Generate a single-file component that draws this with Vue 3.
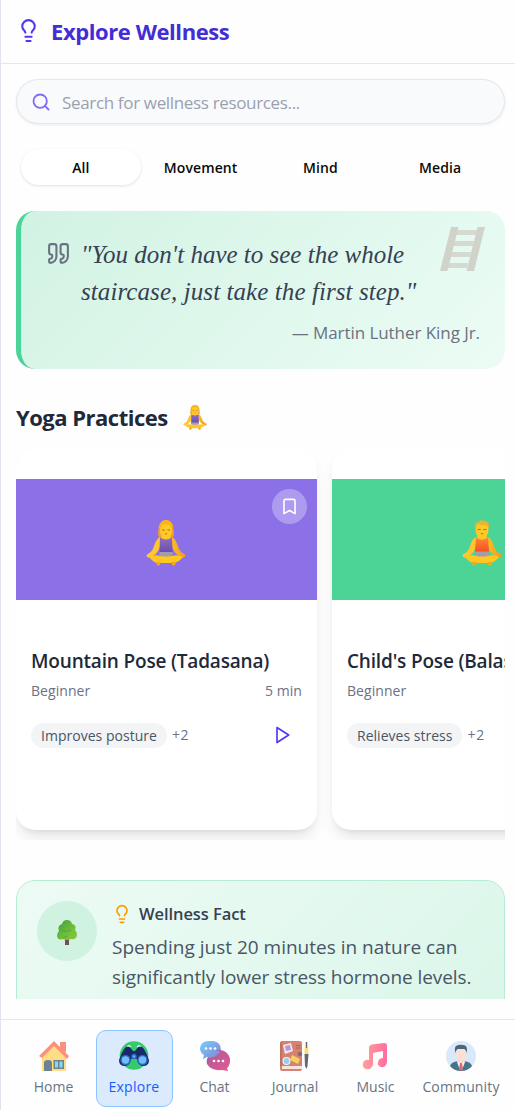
<script setup>
const tabs = ['All', 'Movement', 'Mind', 'Media']
const poses = [
  { name: 'Mountain Pose (Tadasana)', level: 'Beginner', time: '5 min', tag: 'Improves posture', theme: 'violet', figure: 'yoga-woman' },
  { name: "Child's Pose (Balasana)", level: 'Beginner', time: '', tag: 'Relieves stress', theme: 'green', figure: 'yoga-man' }
]
const nav = [
  { label: 'Home', icon: 'home' },
  { label: 'Explore', icon: 'explore' },
  { label: 'Chat', icon: 'chat' },
  { label: 'Journal', icon: 'journal' },
  { label: 'Music', icon: 'music' },
  { label: 'Community', icon: 'community' }
]
</script>

<template>
  <div class="app">
    <svg class="defs" width="0" height="0">
      <defs>
        <linearGradient id="g-skin" x1="0" y1="0" x2="1" y2="0">
          <stop offset="0" stop-color="#ffc83a" /><stop offset=".6" stop-color="#ffc21e" /><stop offset="1" stop-color="#f09a25" />
        </linearGradient>
        <linearGradient id="g-violet" x1="0" y1="0" x2="0" y2="1">
          <stop offset="0" stop-color="#9070c4" /><stop offset="1" stop-color="#6a50ae" />
        </linearGradient>
        <linearGradient id="g-orange" x1="0" y1="0" x2="0" y2="1">
          <stop offset="0" stop-color="#ff8a3c" /><stop offset="1" stop-color="#f4511e" />
        </linearGradient>
        <linearGradient id="g-chat1" x1="0" y1="0" x2="1" y2="1">
          <stop offset="0" stop-color="#79cdf8" /><stop offset="1" stop-color="#7e83d8" />
        </linearGradient>
        <linearGradient id="g-chat2" x1="0" y1="0" x2="1" y2="1">
          <stop offset="0" stop-color="#a55a9b" /><stop offset="1" stop-color="#e65a91" />
        </linearGradient>
        <linearGradient id="g-music" x1="0" y1="0" x2="1" y2="0">
          <stop offset="0" stop-color="#ffa09a" /><stop offset="1" stop-color="#ff6d9e" />
        </linearGradient>
        <linearGradient id="g-tree" x1="0" y1="0" x2="1" y2="1">
          <stop offset="0" stop-color="#3f9a42" /><stop offset=".55" stop-color="#6dbd3a" /><stop offset="1" stop-color="#8fc640" />
        </linearGradient>
        <symbol id="bulb" viewBox="0 0 24 24">
          <path d="M15 14c.2-1 .7-1.7 1.5-2.5 1-.9 1.5-2.2 1.5-3.5A6 6 0 0 0 6 8c0 1 .2 2.2 1.5 3.5.7.7 1.3 1.5 1.5 2.5M9 18h6M10 22h4" fill="none" stroke="currentColor" stroke-width="2" stroke-linecap="round" stroke-linejoin="round" />
        </symbol>
        <symbol id="yoga-body" viewBox="0 0 40 46">
          <path d="M15 17C10 18 9 24 7 29Q5 33 1 34.500Q-.5 37 3 37.800Q9 36 12 31L15 25L25 25L28 31Q31 36 37 37.800Q40.500 37 39 34.500Q35 33 33 29C31 24 30 18 25 17L23 14H17Z" fill="url(#g-skin)" />
          <path d="M3 37Q9 34 14 36H26Q31 34 37 37Q32 43 27 43H12Q8 43 3 37Z" fill="#ffc81e" />
          <path d="M10 42H15L13.500 45.500H11ZM25 42H30L29 45.500H26.500Z" fill="#f6a51f" />
          <path d="M14 31H26L27 35L24 36.500H16L13 35Z" fill="#a49bad" />
        </symbol>
        <symbol id="yoga-woman" viewBox="0 0 40 46">
          <path d="M13.500 18Q11 14 12.500 10Q12 1 20 0Q28 1 27.500 10Q29 14 26.500 18Z" fill="#f0a02a" />
          <use href="#yoga-body" width="40" height="46" />
          <path d="M14 17Q20 22 26 17L26.500 32H13.500Z" fill="url(#g-violet)" />
          <ellipse cx="20" cy="10.500" rx="6" ry="8" fill="#ffc928" />
          <path d="M13 9Q15 3 20 4.500Q25 3 27 8Q26 0 20 0Q14 0 13 9Z" fill="#ffb414" />
          <path d="M16 10h2.700M21.500 10h2.700" stroke="#8e5b24" stroke-width=".8" />
          <path d="M18.500 13.600h3L20 14.800Z" fill="#e93830" />
        </symbol>
        <symbol id="yoga-man" viewBox="0 0 40 46">
          <use href="#yoga-body" width="40" height="46" />
          <path d="M14 17Q20 23 26 17L27 31.500H13Z" fill="url(#g-orange)" />
          <ellipse cx="20" cy="10" rx="6.500" ry="8" fill="#ffc928" />
          <path d="M13 8Q12 3 16 2Q19-1 23 1Q28 2 27 8L25 5Q20 6 16 4Z" fill="#e8b431" />
          <path d="M15.700 9.500h3M21.400 9.500h3" stroke="#8e5b24" stroke-width=".8" />
          <path d="M18.500 13.200h3L20 14.400Z" fill="#c45125" />
        </symbol>
        <symbol id="home" viewBox="0 0 30 30">
          <path d="M5 13L15 4L27 14V30H3V15Z" fill="#ffdc86" />
          <path d="M21 1H27V12L21 7Z" fill="#fa8f7e" />
          <path d="M0 15L15 0L30 15L28 18L15 5L3 17Z" fill="#fd8f7d" />
          <path d="M5 30V22Q5 19 9 19Q13 19 13 22V30Z" fill="#6e8290" />
          <path d="M14.500 19H25V28H14.500Z" fill="#6e8290" />
          <path d="M16 20.500H19V26.500H16ZM20.500 20.500H23.500V26.500H20.500Z" fill="#86d8f6" />
        </symbol>
        <symbol id="explore" viewBox="0 0 30 30">
          <circle cx="15" cy="14.500" r="14.300" fill="#35ca6c" />
          <path d="M9 7Q8 3 12 6M21 7Q22 3 18 6" fill="none" stroke="#dff8ea" stroke-width="1.300" />
          <path d="M7 6Q11 4.500 13 9L15 10.500L17 9Q19 4.500 23 6Q26 8 30 19Q30 25 24 25Q19 25 18 18H12Q11 25 6 25Q0 25 0 19Q4 8 7 6Z" fill="#17286c" />
          <circle cx="6.500" cy="19" r="5.200" fill="#2e68bd" /><circle cx="23.500" cy="19" r="5.200" fill="#2e68bd" />
          <circle cx="6.500" cy="19" r="3.700" fill="#70beff" /><circle cx="23.500" cy="19" r="3.700" fill="#70beff" />
          <circle cx="15" cy="15.500" r="2.700" fill="#316dc4" /><circle cx="15" cy="15.500" r="1.300" fill="#64adfd" />
        </symbol>
        <symbol id="chat" viewBox="0 0 30 30">
          <path d="M9 0H13Q21 1 21 9Q20 15 13 16H7L3 18L4 14Q0 12 0 7Q1 0 9 0Z" fill="url(#g-chat1)" />
          <path d="M16 10Q19 8 24 10Q31 14 30 21Q29 26 27 27L28 30L22 29Q11 30 7 23Q6 19 8 16Q13 17 17 14Q20 12 20 10Z" fill="url(#g-chat2)" />
          <g fill="#fff"><circle cx="6" cy="7.500" r="1.300" /><circle cx="10.500" cy="7.500" r="1.300" /><circle cx="15" cy="7.500" r="1.300" /><circle cx="14" cy="20" r="1.300" /><circle cx="18.500" cy="20" r="1.300" /><circle cx="23" cy="20" r="1.300" /></g>
        </symbol>
        <symbol id="journal" viewBox="0 0 30 30">
          <rect x="0" y="0" width="22" height="30" rx="2" fill="#d58370" />
          <path d="M2 25H22V28H2Z" fill="#f5e5dd" /><path d="M1 1V25M16 4.500H20.500M16 7H20.500" stroke="#9a5c55" stroke-width=".8" />
          <path d="M3 4L11 2L13 10L5 13Z" fill="#f6e6ee" /><path d="M5 5L10 4L11 9L6 10Z" fill="#b397d9" />
          <circle cx="6.500" cy="20" r="4" fill="#eff5fb" /><circle cx="6.500" cy="20" r="2.900" fill="#9acbf0" />
          <path d="M12 14L20 18L18 23L10 19Z" fill="#f5d062" /><circle cx="20" cy="13" r="2.300" fill="#876b70" />
          <path d="M25 1H28L28.500 13H24.500Z" fill="#f9df68" /><path d="M24.500 13H28.500L27.500 25L26.500 28L25 25Z" fill="#616873" /><path d="M26.500 1V7" stroke="#616873" stroke-width="1" />
        </symbol>
        <symbol id="music" viewBox="0 0 30 30">
          <path d="M8 7Q8 4 11 3.500L23 2Q26 2 26 5V21Q25 27 20 26Q16 25 17 21Q18 17 22 17V10L12 12V23Q11 29 5 28Q1 27 2 22Q4 18 8 19Z" fill="url(#g-music)" />
        </symbol>
        <symbol id="community" viewBox="0 0 30 30">
          <circle cx="15" cy="15" r="15" fill="#d8e9fb" />
          <path d="M4 25Q5 21 12 20H18Q25 21 26 25Q22 30 15 30Q8 30 4 25Z" fill="#48738a" />
          <path d="M11 18H19V21L15 25L11 21Z" fill="#fbd9cd" />
          <path d="M11 21L15 23L19 21L16 29H14Z" fill="#f5f7fc" /><path d="M14 22H16L17 28L15 30L13 28Z" fill="#d66d75" />
          <ellipse cx="15" cy="12.500" rx="5.200" ry="7" fill="#fedfd3" />
          <path d="M9.500 12Q8 7 10 5Q14 3 19 4.500Q22 6 20.500 12Q20 9 18.500 8H11.500Q10 9 9.500 12Z" fill="#4a6577" />
        </symbol>
      </defs>
    </svg>

    <header class="header">
      <svg class="header-icon"><use href="#bulb" /></svg>
      <h1>Explore Wellness</h1>
    </header>

    <main class="content">
      <div class="search">
        <svg viewBox="0 0 24 24" width="20" height="20"><circle cx="11" cy="11" r="8" /><path d="m21 21-4.300-4.300" /></svg>
        <span>Search for wellness resources...</span>
      </div>

      <div class="tabs">
        <button v-for="(tab, i) in tabs" :key="tab" :class="{ active: i === 0 }">{{ tab }}</button>
      </div>

      <section class="quote">
        <svg class="ladder" viewBox="0 0 45 45">
          <path d="M13 3H37L36 8H12ZM10 14H34L33 19H9ZM7 25H31L30 30H6ZM4 36H28L27 41H3Z" fill="#d5d9cf" />
          <path d="M11 0H18.500L7.500 44H0ZM37.500 0H45L34 44H26.500Z" fill="#d1d3ca" />
        </svg>
        <div class="quote-row">
          <svg class="quote-icon" viewBox="0 0 24 24"><path d="M16 3a2 2 0 0 0-2 2v6a2 2 0 0 0 2 2 1 1 0 0 1 1 1v1a2 2 0 0 1-2 2 1 1 0 0 0-1 1v2a1 1 0 0 0 1 1 6 6 0 0 0 6-6V5a2 2 0 0 0-2-2zM5 3a2 2 0 0 0-2 2v6a2 2 0 0 0 2 2 1 1 0 0 1 1 1v1a2 2 0 0 1-2 2 1 1 0 0 0-1 1v2a1 1 0 0 0 1 1 6 6 0 0 0 6-6V5a2 2 0 0 0-2-2z" /></svg>
          <blockquote><span class="line-one">"You don't have to see the whole</span><br><span class="line-two">staircase, just take the first step."</span></blockquote>
        </div>
        <p class="author">— Martin Luther King Jr.</p>
      </section>

      <h2>Yoga Practices <svg width="24" height="25" viewBox="0 0 40 46" preserveAspectRatio="none"><use href="#yoga-woman" width="40" height="46" /></svg></h2>

      <div class="carousel">
        <article v-for="pose in poses" :key="pose.name" class="card">
          <div class="cover" :class="pose.theme">
            <svg width="40" height="46"><use :href="'#' + pose.figure" /></svg>
            <span class="bookmark"><svg viewBox="0 0 24 24" width="19" height="19"><path d="m19 21-7-4-7 4V5a2 2 0 0 1 2-2h10a2 2 0 0 1 2 2z" /></svg></span>
          </div>
          <div class="card-body">
            <h3>{{ pose.name }}</h3>
            <div class="meta"><span>{{ pose.level }}</span><span v-if="pose.time">{{ pose.time }}</span></div>
            <div class="benefits">
              <span class="tag">{{ pose.tag }}</span><span class="more">+2</span>
              <svg class="play" viewBox="0 0 24 24"><path d="M6 3l14 9-14 9z" /></svg>
            </div>
          </div>
        </article>
      </div>

      <div class="fact-window">
        <section class="fact">
          <div class="fact-icon">
            <svg width="20" height="25" viewBox="0 0 20 25">
              <path d="M8 17H12V25H8Z" fill="#795052" />
              <path d="M10 0Q14 0 15 4Q20 5 18 10Q21 13 19.500 17Q18 20 14 19Q10 21 6 19Q1 21 0 16Q0 13 2 11Q0 6 5 4Q6 0 10 0Z" fill="url(#g-tree)" />
              <path d="M5 10Q9 13 14 10M6 18Q8 17 10 16" fill="none" stroke="#4d9d32" stroke-width=".8" />
            </svg>
          </div>
          <div class="fact-copy">
            <h4><svg><use href="#bulb" /></svg><span>Wellness Fact</span></h4>
            <p>Spending just 20 minutes in nature can<br><span class="fact-two">significantly lower stress hormone levels.</span></p>
          </div>
        </section>
      </div>
    </main>

    <nav class="nav">
      <a v-for="item in nav" :key="item.label" :class="[item.icon, { current: item.icon === 'explore' }]">
        <svg width="30" height="30"><use :href="'#' + item.icon" /></svg>
        <span>{{ item.label }}</span>
      </a>
    </nav>
  </div>
</template>

<style>
html, body { margin: 0; overflow: hidden; background: #fefefe; }
</style>

<style scoped>
* { box-sizing: border-box; }
.app { height: 1110px; width: 515px; display: flex; flex-direction: column; border-left: 1px solid #e1e4f0; background: #fefefe; font-family: "Open Sans", "Noto Sans", sans-serif; color: #1e2939; overflow: hidden; }
.defs { position: absolute; }
svg { display: block; flex: none; }
h1, h2, h3, h4, p, blockquote { margin: 0; white-space: nowrap; }
.header { height: 64px; flex: none; display: flex; align-items: center; padding: 0 0 1px 15px; gap: 10px; border-bottom: 1px solid #e5e7eb; color: #4f39f6; }
.header-icon { width: 25px; height: 25px; margin-top: -1px; }
h1 { font-size: 22px; line-height: 30px; font-weight: 700; letter-spacing: -.42px; color: #432dd7; }
.content { flex: 1; min-height: 0; padding: 15px 10px 0 15px; display: flex; flex-direction: column; }
.search { height: 45px; flex: none; display: flex; align-items: center; gap: 11px; padding: 0 14px; border: 1px solid #e5e7eb; border-radius: 23px; background: #f9fafc; box-shadow: 0 1px 3px rgba(0,0,0,.08); }
.search svg { fill: none; stroke: #7c6cfb; stroke-width: 2.200; stroke-linecap: round; }
.search span { font-size: 17px; letter-spacing: -.34px; color: #99a1af; padding-top: 1px; }
.tabs { display: grid; grid-template-columns: repeat(4, 1fr); height: 36px; margin-top: 25px; padding: 0 5px; flex: none; }
.tabs button { height: 36px; border: 0; padding: 2px 0 0; background: transparent; border-radius: 18px; font: 600 14px/34px "Open Sans", sans-serif; letter-spacing: .1px; color: #0a0a0a; }
.tabs .active { background: #fff; box-shadow: 0 1px 3px rgba(0,0,0,.12); }
.quote { position: relative; height: 158px; margin-top: 26px; padding: 25px; border-left: 5px solid #4bd497; border-radius: 19px; background: linear-gradient(135deg, #d1f3e3, #ecfcf5); flex: none; }
.ladder { position: absolute; right: 20px; top: 16px; width: 45px; height: 45px; }
.quote-row { display: flex; gap: 10px; height: 75px; }
.quote-icon { width: 25px; height: 25px; margin-top: 5px; fill: none; stroke: #6a7282; stroke-width: 2; stroke-linejoin: round; }
blockquote { font: italic 25px/37px "Liberation Serif", serif; color: #364153; }
.line-two { letter-spacing: .08px; }
.author { margin-top: 9px; text-align: right; font-size: 17px; line-height: 26px; color: #6a7282; letter-spacing: -.06px; }
h2 { display: flex; gap: 15px; align-items: center; flex: none; margin-top: 33px; font-size: 22px; line-height: 30px; letter-spacing: -.5px; height: 30px; font-weight: 700; }
.carousel { display: flex; gap: 15px; margin-top: 18px; height: 390px; overflow: hidden; flex: none; }
.card { width: 301px; height: 380px; flex: none; border-radius: 19px; background: #fff; padding-top: 29px; box-shadow: 0 10px 15px -3px rgba(0,0,0,.1), 0 4px 6px -4px rgba(0,0,0,.1); }
.cover { position: relative; height: 121px; display: flex; align-items: center; justify-content: center; padding: 6px 2px 0 0; }
.violet { background: #8b70e8; }
.green { background: #4cd497; }
.bookmark { position: absolute; top: 10px; right: 10px; width: 35px; height: 35px; border-radius: 50%; background: rgba(255,255,255,.3); display: grid; place-items: center; }
.bookmark svg, .play { fill: none; stroke: #fff; stroke-width: 2; stroke-linejoin: round; }
.card-body { padding: 47px 15px 0; }
h3 { font-size: 19px; line-height: 29px; font-weight: 600; letter-spacing: -.18px; }
.meta { display: flex; justify-content: space-between; margin-top: 5px; line-height: 20px; font-size: 14px; letter-spacing: .05px; color: #6a7282; }
.benefits { display: flex; align-items: center; margin-top: 22px; height: 25px; color: #6a7282; font-size: 14px; }
.tag { height: 25px; line-height: 26px; padding: 0 10px; border-radius: 13px; background: #f3f4f6; color: #4a5565; letter-spacing: .02px; white-space: nowrap; }
.more { margin: -3px 0 0 5px; letter-spacing: .7px; }
.play { width: 20px; height: 20px; stroke: #4f39f6; margin: -1px 10px 0 auto; }
.fact-window { height: 119px; margin-top: 40px; overflow: hidden; flex: none; }
.fact { height: 150px; display: flex; gap: 15px; padding: 20px; border: 1px solid #b6edd2; border-radius: 19px; background: linear-gradient(135deg, #edfbf5, #daf6e9); }
.fact-icon { width: 60px; height: 60px; border-radius: 50%; background: #cff2e1; flex: none; display: grid; place-items: center; padding-top: 3px; }
h4 { display: flex; align-items: center; height: 25px; gap: 7px; font-size: 16.500px; font-weight: 600; letter-spacing: -.08px; color: #364153; }
h4 svg { width: 20px; height: 20px; color: #fe9a00; }
.fact-copy p { margin-top: 6px; font-size: 19px; line-height: 30px; color: #4a5565; letter-spacing: 0; }
.fact-two { letter-spacing: -.07px; }
.nav { height: 91px; flex: none; display: flex; border-top: 1px solid #e5e7eb; padding: 10px 3px 3px 14px; gap: 3.500px; }
.nav a { width: 77px; height: 77px; flex: none; display: flex; flex-direction: column; align-items: center; padding-top: 10px; color: #687482; font-size: 14px; line-height: 20px; letter-spacing: 0; border: 1px solid transparent; border-radius: 10px; }
.nav a span { margin-top: 6px; }
.nav .current { background: #dbeafc; border-color: #8ec5ff; color: #155dfc; }
.nav .current span { letter-spacing: .25px; }
.nav .community { width: 87px; letter-spacing: .15px; }
</style>
